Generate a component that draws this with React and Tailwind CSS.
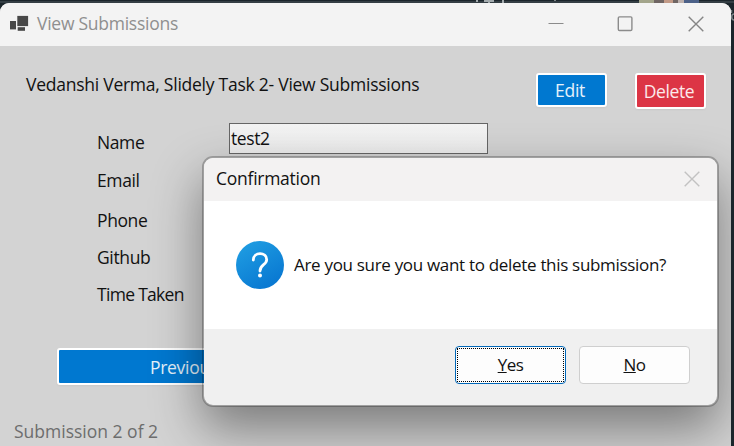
const labels = [
  ['Name', 'mt-[7px] tracking-[-0.4px]'],
  ['Email', 'mt-[14px] tracking-[-0.4px]'],
  ['Phone', 'mt-[16px] tracking-[-0.4px]'],
  ['Github', 'mt-[13px] tracking-[-0.35px]'],
  ['Time Taken', 'mt-[13px] tracking-[-0.7px]'],
];

function AppIcon() {
  return (
    <svg width="20" height="18" viewBox="0 0 20 18" className="mt-[12px] shrink-0" fill="#484848">
      <rect x="8.3" y="0.9" width="10.8" height="10.2" />
      <rect x="1" y="6" width="6" height="8.4" />
      <rect x="8.7" y="12.2" width="7.3" height="3.6" />
    </svg>
  );
}

function Close({ stroke }) {
  return (
    <svg width="16" height="16" viewBox="0 0 16 16" stroke={stroke} strokeWidth="1.4">
      <path d="M0.7 0.7 15.3 15.3M15.3 0.7 0.7 15.3" />
    </svg>
  );
}

// Sliver of the desktop that shows above and beside the window
function Desktop() {
  return (
    <svg width="734" height="446" className="absolute left-0 top-0">
      <rect width="734" height="446" fill="#1b252b" />
      <rect y="1" width="734" height="2" fill="#343e44" />
      <path d="M477 0v2M484 1h10M489 0v3M503 0v3" stroke="#a2aaad" strokeWidth="2" />
      <rect x="554" width="2" height="1" fill="#7d8588" />
      <rect x="639" width="60" height="3" fill="#6f6563" />
      <rect x="639" width="15" height="3" fill="#a3a58b" />
      <rect x="664" width="9" height="3" fill="#c29a87" />
      <rect x="678" width="6" height="3" fill="#bcb0ad" />
      <rect x="684" width="15" height="3" fill="#4c6188" />
      <path d="M731.5 10v3M734 14c-3 0-3 6 0 6" stroke="#7c8589" strokeWidth="1.5" fill="none" />
    </svg>
  );
}

function TitleBar() {
  return (
    <header className="flex h-[43px] shrink-0 items-start bg-[#f3f3f3] pl-[9px]">
      <AppIcon />
      <h1 className="ml-[8px] mt-[8px] flex-1 tracking-[-0.26px] text-[#8f8f8f]">View Submissions</h1>
      <div className="mt-[13px] flex pr-[27px]">
        <svg width="16" height="16" viewBox="0 0 16 16" stroke="#8b8b8b"><path d="M0.5 7.5h15" /></svg>
        <svg width="16" height="16" viewBox="0 0 16 16" fill="none" stroke="#8b8b8b" strokeWidth="1.4" className="ml-[53px]"><rect x="1.3" y="0.9" width="13.6" height="13.6" rx="1.2" /></svg>
        <div className="ml-[55px]"><Close stroke="#858585" /></div>
      </div>
    </header>
  );
}

function Dialog() {
  return (
    <section className="absolute left-[202px] top-[153px] flex h-[251px] w-[517px] flex-col overflow-hidden rounded-[11px] border-2 border-black/24 bg-[#f0f0f0] bg-clip-padding shadow-[0_22px_50px_rgba(0,0,0,0.42)]">
      <div className="flex h-[43px] shrink-0 items-start bg-[#f3f2f2] pl-[12px] pr-[17px]">
        <h2 className="mt-[8px] flex-1 tracking-[-0.26px]">Confirmation</h2>
        <div className="mt-[13px]"><Close stroke="#c2c2c2" /></div>
      </div>
      <div className="flex h-[128px] shrink-0 items-center bg-white pl-[32px] text-[17px]">
        <svg width="48" height="48" viewBox="0 0 48 48">
          <defs>
            <linearGradient id="disc" x1="0.2" y1="0" x2="0.8" y2="1">
              <stop offset="0" stopColor="#1f9de2" />
              <stop offset="1" stopColor="#0775d0" />
            </linearGradient>
          </defs>
          <circle cx="24" cy="24" r="24" fill="url(#disc)" />
          <path d="M17.3 19C17.3 10.5 30.7 10.5 30.7 18.5C30.7 24 24 23.5 24 30" fill="none" stroke="white" strokeWidth="2.8" strokeLinecap="round" />
          <circle cx="24" cy="34.6" r="2" fill="white" />
        </svg>
        <p className="ml-[10px] tracking-[-0.31px]">Are you sure you want to delete this submission?</p>
      </div>
      <div className="flex gap-[13px] pl-[251px] pt-[17px] text-[17px] tracking-[-0.5px]">
        <button className="h-[38px] w-[111px] rounded-[4px] border border-[#0067b8] bg-[#fdfdfd] p-px">
          <span className="flex h-full items-center justify-center border border-dotted border-black"><u>Y</u>es</span>
        </button>
        <button className="h-[38px] w-[111px] rounded-[4px] border border-[#cfcfcf] bg-[#fdfdfd]"><u>N</u>o</button>
      </div>
    </section>
  );
}

export default function App() {
  return (
    <div className="relative h-[446px] w-[734px] overflow-hidden pt-[3px] font-['Open_Sans',sans-serif] text-[17.5px] leading-[24px] text-[#111]">
      <Desktop />
      <div className="relative flex h-[443px] w-[731px] flex-col overflow-hidden rounded-t-[9px] bg-[#d3d3d3]">
        <TitleBar />
        <main className="flex-1">
          <div className="flex items-start pl-[26px] pt-[27px]">
            <p className="-mt-px w-[510px] tracking-[-0.25px]">Vedanshi Verma, Slidely Task 2- View Submissions</p>
            <button className="h-[34px] w-[71px] rounded-[3px] border-2 border-white bg-[#0078d0] pr-[3px] tracking-[-0.3px] text-white/90 shadow-xs">Edit</button>
            <button className="ml-[28px] h-[36px] w-[71px] rounded-[3px] border-2 border-white bg-[#dc3545] pr-[3px] tracking-[-0.4px] text-white/90 shadow-xs">Delete</button>
          </div>
          <div className="flex pl-[97px] pt-[14px]">
            <div className="flex w-[132px] flex-col">
              {labels.map(([name, style]) => <span key={name} className={style}>{name}</span>)}
            </div>
            <div className="h-[31px] w-[259px] border border-[#666] bg-linear-to-b from-[#f3f3f3] to-[#ededed] pl-px leading-[29px] tracking-[-0.4px]">test2</div>
          </div>
          <button className="ml-[57px] mt-[42px] h-[37px] w-[290px] rounded-[3px] border-2 border-white bg-[#0078d0] pl-[91px] text-left tracking-[-0.3px] text-white/90 shadow-xs">Previous</button>
          <p className="pl-[14px] pt-[34px] text-[#6d6d6d]">Submission 2 of 2</p>
        </main>
        <Dialog />
      </div>
    </div>
  );
}
